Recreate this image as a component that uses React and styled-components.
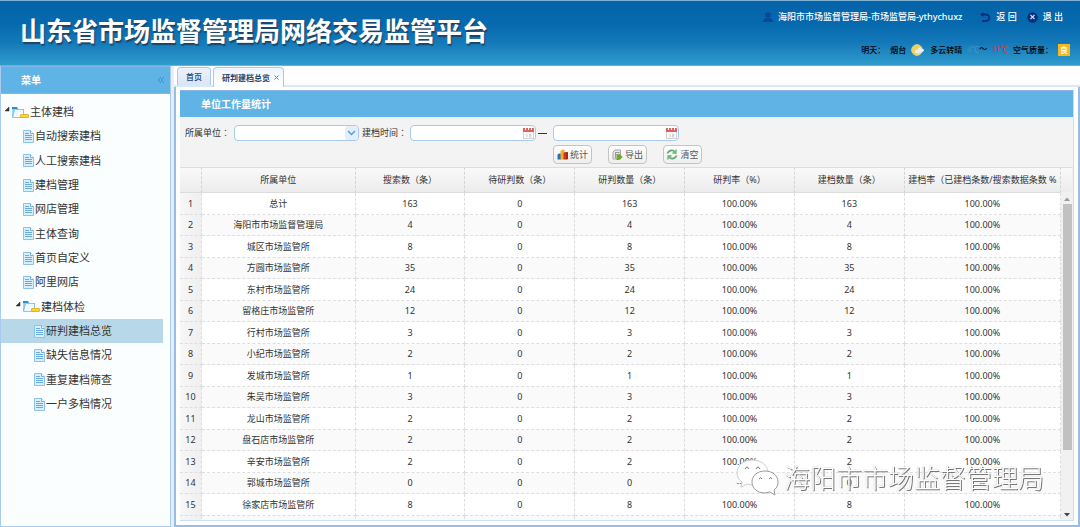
import React from "react";
import styled, { createGlobalStyle } from "styled-components";

const Global = createGlobalStyle`
  *, *::before, *::after { box-sizing: border-box; }
  body {
    margin: 0;
    font: 9px/12px "Noto Sans", "Noto Sans CJK SC", sans-serif;
    color: #333;
    background: #fff;
  }
  button, input, select { font: inherit; color: inherit; }
`;

const Page = styled.div`
  height: 100vh;
  display: flex;
  flex-direction: column;
  overflow: hidden;
`;

const Header = styled.header`
  flex: none;
  height: 66px;
  display: flex;
  justify-content: space-between;
  border-top: 1px solid #7fb4d8;
  border-bottom: 1px solid #66b0dc;
  background: linear-gradient(#0563a9 0%, #0669ae 35%, #1479b9 65%, #2f9ccd 100%);
`;

const Title = styled.h1`
  margin: 0;
  padding: 9px 0 0 20px;
  font: 700 26px/40px "Noto Sans CJK SC", sans-serif;
  color: #fff;
  text-shadow: 1px 2px 1px #1d4467;
  white-space: nowrap;
`;

const HeaderSide = styled.div`
  display: flex;
  flex-direction: column;
  align-items: flex-end;
  gap: 20px;
  padding: 10px 10px 0 0;
  white-space: nowrap;
`;

const UserBar = styled.div`
  display: flex;
  align-items: center;
  padding-right: 7px;
  color: #fff;
  font-weight: 500;
`;

const UserName = styled.span`
  margin: 0 18px 0 5px;
`;

const HeaderLink = styled.a`
  display: flex;
  align-items: center;
  gap: 5px;
  margin-left: ${(p) => (p.$spaced ? 10 : 0)}px;
  color: #fff;
  text-decoration: none;
`;

const Weather = styled.div`
  display: flex;
  align-items: center;
  gap: 5px;
  color: #000;
  font-family: "Noto Sans CJK SC", sans-serif;
  font-size: 8px;
  font-weight: 500;
`;

const Degree = styled.span`
  font-family: "Liberation Serif", "Noto Sans CJK SC", serif;
  color: ${(p) => p.$color};
`;

const AirBadge = styled.span`
  width: 12px;
  height: 12px;
  line-height: 12px;
  text-align: center;
  background: #f9b721;
  color: #fff;
`;

const Body = styled.div`
  flex: 1;
  min-height: 0;
  display: flex;
  gap: 3px;
  background: #e6effb;
`;

const Sidebar = styled.nav`
  flex: none;
  width: 171px;
  border: solid #a9cbf0;
  border-width: 0 1px 1px 1px;
  background: #fafeff;
`;

const MenuHead = styled.div`
  display: flex;
  align-items: center;
  justify-content: space-between;
  height: 28px;
  padding: 0 5px 0 20px;
  border: solid #86b4e6;
  border-width: 1px 0;
  background: #60b4e5;
  color: #fff;
  font-size: 10px;
  font-weight: 700;
`;

const CollapseButton = styled.button`
  display: flex;
  padding: 0;
  border: 0;
  background: none;
`;

const Tree = styled.ul`
  margin: 6px 7px 0 0;
  padding: 0;
  list-style: none;
`;

const TreeItem = styled.li`
  height: 24px;
  &:nth-child(3n) { height: 25px; }
`;

const TreeLink = styled.a`
  display: flex;
  align-items: center;
  height: 100%;
  padding-left: ${(p) => p.$indent}px;
  gap: 1px;
  background: ${(p) => (p.$active ? "#b7d8e8" : "transparent")};
  color: #333;
  font-size: 11px;
  line-height: 16px;
  text-decoration: none;
  white-space: nowrap;
`;

const Main = styled.main`
  flex: 1;
  min-width: 0;
  display: flex;
  flex-direction: column;
  background: #fff;
`;

const Tabs = styled.div`
  flex: none;
  display: flex;
  align-items: flex-end;
  gap: 2px;
  height: 21px;
  padding: 0 3px;
  border-bottom: 2px solid #dbe8f8;
`;

const Tab = styled.button`
  display: flex;
  align-items: center;
  gap: 4px;
  height: ${(p) => (p.$active ? 20 : 18)}px;
  margin-bottom: ${(p) => (p.$active ? -2 : 0)}px;
  padding: 0 ${(p) => (p.$active ? 4 : 8)}px 0 8px;
  border: 1px solid #a9c8ee;
  border-bottom: 0;
  border-radius: 4px 4px 0 0;
  background: ${(p) => (p.$active ? "linear-gradient(#eef5fd, #fff)" : "linear-gradient(#edf3fc, #d9e6f7)")};
  color: #24466f;
  font-size: 8px;
  font-weight: ${(p) => (p.$active ? 700 : 500)};
  white-space: nowrap;
`;

const Frame = styled.div`
  flex: 1;
  min-height: 0;
  display: flex;
  padding: 3px 4px 4px 4px;
  border: solid #96bce8;
  border-width: 0 2px 2px 2px;
`;

const Panel = styled.section`
  position: relative;
  flex: 1;
  min-width: 0;
  display: flex;
  flex-direction: column;
  border: solid #c9dff5;
  border-width: 0 1px 1px 0;
  overflow: hidden;
`;

const PanelTitle = styled.h2`
  flex: none;
  margin: 0;
  height: 27px;
  padding-left: 21px;
  border-top: 1px solid #86b4e6;
  background: #60b4e5;
  color: #fff;
  font-size: 10px;
  line-height: 26px;
`;

const Filters = styled.form`
  flex: none;
  height: 50px;
  padding: 8px 0 0 5px;
  background: #f3f3f3;
`;

const FilterRow = styled.div`
  display: flex;
  align-items: center;
  height: 16px;
  white-space: nowrap;
`;

const FieldLabel = styled.label`
  width: ${(p) => p.$width}px;
  font-family: "Noto Sans", "Noto Sans CJK TC", sans-serif;
`;

const Field = styled.div`
  position: relative;
  width: ${(p) => p.$width || 126}px;
  height: 16px;
  margin-right: ${(p) => p.$after || 0}px;
  svg { position: absolute; right: 1px; top: 1px; pointer-events: none; }
`;

const Dash = styled.span`
  width: 9px;
  height: 1px;
  margin: 0 6px 0 2px;
  background: #333;
`;

const controlBox = `
  display: block;
  width: 100%;
  height: 16px;
  margin: 0;
  padding: 0 16px 0 4px;
  border: 1px solid #a9c9ee;
  border-radius: 4px;
  background: #fff;
  appearance: none;
  outline: 0;
`;
const Select = styled.select`${controlBox}`;
const Input = styled.input`${controlBox}`;

const Actions = styled.div`
  display: flex;
  gap: 16px;
  margin: 4px 0 0 368px;
`;

const ActionButton = styled.button`
  display: flex;
  align-items: center;
  justify-content: center;
  gap: 2px;
  width: 39px;
  height: 19px;
  padding: 0;
  border: 1px solid #c4c4c4;
  border-radius: 4px;
  background: linear-gradient(#fff, #eee);
  color: #555;
  white-space: nowrap;
`;

const GridArea = styled.div`
  flex: 1;
  min-height: 0;
  overflow: hidden;
  background: #fff;
`;

const Table = styled.table`
  width: 100%;
  border-collapse: separate;
  border-spacing: 0;
  table-layout: fixed;
`;

const Th = styled.th`
  height: 26px;
  padding: 0;
  border: 1px solid #ddd;
  border-width: 1px 0;
  border-right: 1px ${(p) => (p.$last ? "solid #eee" : "dashed #d4d4d4")};
  background: linear-gradient(#f9f9f9, #ececec);
  font-family: "Noto Sans", "Noto Sans CJK TC", sans-serif;
  font-weight: 400;
  overflow: hidden;
  white-space: nowrap;
`;

const Row = styled.tr`
  height: 22px;
  background: #fff;
  &:nth-child(even) { height: 21px; background: #fafafa; }
`;

const Td = styled.td`
  padding: 0;
  border: 0 dashed #dedede;
  border-width: 0 1px 1px 0;
  text-align: center;
  line-height: 12px;
  color: ${(p) => (p.$alert ? "#e33" : "#333")};
  background: ${(p) => (p.$index ? "linear-gradient(90deg, #f7f7f7, #efefef)" : "none")};
`;

const ScrollTrack = styled.div`
  position: absolute;
  top: 102px;
  right: 0;
  bottom: 0;
  width: 12px;
  display: flex;
  flex-direction: column;
  align-items: center;
  padding: 5px 0 3px;
  gap: 3px;
  background: #f1f1f1;
`;

const ScrollThumb = styled.div`
  width: 9px;
  height: 77%;
  margin-bottom: auto;
  background: #c1c1c1;
`;

const Watermark = styled.div`
  position: fixed;
  right: 36px;
  bottom: 31px;
  display: flex;
  align-items: center;
  gap: 4px;
  font: 300 26px/38px "Noto Sans CJK SC", sans-serif;
  color: #fff;
  text-shadow: 1px 1px 0 #777, 0 0 1px #aaa;
  white-space: nowrap;
  pointer-events: none;
`;

const FolderIcon = () => (
  <svg width="18" height="13" viewBox="0 0 18 13">
    <path d="M1 1h5l1 2h6v8H1z" fill="#2b8fc9" />
    <path d="M3.500 3.500h9v8H1.500z" fill="#eefaff" stroke="#86c8ec" />
    <path d="M1 3v8l2-7h3" fill="#a9daf5" />
    <rect x="9.500" y="8.500" width="8" height="3" rx="0.500" fill="#fbd42c" stroke="#e2aa10" strokeWidth="0.800" />
  </svg>
);

const FileIcon = () => (
  <svg width="11" height="13" viewBox="0 0 11 13">
    <path d="M.5.500h7l3 3v9H.5z" fill="#d8effb" stroke="#8cc3e6" />
    <path d="M7.500.500v3h3" fill="#fff" stroke="#74b4dc" />
    <path d="M2 3.500h4M2 5.500h7M2 7.500h7M2 9.500h7" stroke="#6aaad6" />
  </svg>
);

const Expander = () => (
  <svg width="6" height="6" viewBox="0 0 6 6" style={{ marginBottom: "6px" }}>
    <path d="M5 1v4H1z" fill="#333" stroke="#333" strokeWidth=".5" />
  </svg>
);

const CalendarIcon = () => (
  <svg width="13" height="13" viewBox="0 0 13 13">
    <rect x="1.500" y="2.500" width="10" height="10" fill="#fafafa" stroke="#d5d0d0" />
    <path d="M1 2h11v4H1z" fill="#e0625e" />
    <path d="M3.500 1v3M6.500 1v3M9.500 1v3" stroke="#fff" />
    <path d="M5 8v3M7 8.500h2v1H7.500v1.500h2" fill="none" stroke="#c4c4c4" strokeWidth=".8" />
  </svg>
);

const StatIcon = () => (
  <svg width="11" height="11" viewBox="0 0 11 11">
    <path d="M.5 5.500L2 4.500h2.500V10l-1 .5h-3z" fill="#2c6fb8" />
    <path d="M3.500 2L5 .8h2.500V10l-1 .5h-3z" fill="#f0ae24" />
    <path d="M6.500 4L8 3h2.800v7l-1 .5H6.500z" fill="#cc3524" />
    <path d="M9.500 4.300v6.200l1.300-.5V3z" fill="#97180f" />
  </svg>
);

const ExportIcon = () => (
  <svg width="11" height="11" viewBox="0 0 11 11">
    <path d="M1 10V3l2-2h5.500v9z" fill="#e9e9e9" stroke="#a5a5a5" />
    <path d="M3.500 3.500h4M3.500 5.500h3M3.500 3v6" stroke="#999" />
    <path d="M4.500 6h2V4.300L10.800 8 7 11H4.500z" fill="#6cab24" />
  </svg>
);

const ClearIcon = () => (
  <svg width="12" height="11" viewBox="0 0 12 11">
    <g fill="none" stroke="#62b06b" strokeWidth="1.800">
      <path d="M1.500 4.500C2.500 1 7 .5 9 3" />
      <path d="M10.500 6.500C9.500 10 5 10.500 3 8" />
      <path d="M10 .5v3.500H6.500M2 10.500V7h3.500" strokeWidth="1.300" />
    </g>
  </svg>
);

const UserIcon = () => (
  <svg width="10" height="10" viewBox="0 0 10 10">
    <circle cx="5" cy="3" r="2.800" fill="#0a4796" />
    <path d="M0 10c0-3 2-4 5-4s5 1 5 4z" fill="#0a4796" />
  </svg>
);

const BackIcon = () => (
  <svg width="11" height="11" viewBox="0 0 11 11">
    <path d="M2 2.500h4a3.200 3.200 0 0 1 0 6.500H2" fill="none" stroke="#06307d" strokeWidth="2" />
    <path d="M0 2.500L3.500 0v5z" fill="#06307d" />
  </svg>
);

const ExitIcon = () => (
  <svg width="11" height="11" viewBox="0 0 11 11">
    <circle cx="5.500" cy="5.500" r="5.200" fill="#06307d" />
    <path d="M3.500 3l4 4M7.500 3l-4 4" stroke="#cfe0f5" strokeWidth="1.100" />
  </svg>
);

const SunIcon = () => (
  <svg width="14" height="12" viewBox="0 0 14 12">
    <circle cx="6" cy="6" r="5.300" fill="#f8cf45" stroke="#d9dca0" />
    <path d="M4 8.500c-1-2 1-3.500 2.500-2.500C7 3 10 3 10.500 5c2.500-.5 3 1 2.500 1.500-1 2-3 1.500-4 2.500s-4 1-5-.5z" fill="#e9edf0" />
  </svg>
);

const WechatIcon = () => (
  <svg width="44" height="38" viewBox="0 0 44 38">
    <g fill="#fff" stroke="#ccc" strokeWidth="1">
      <path d="M16 2C7 2 1 8 1 15c0 4 2 7 5 9l-1 5 6-3c14 4 21-4 21-11C32 7 25 2 16 2z" />
      <path d="M29 13c-8 0-13 5-13 11s5 11 13 11l5-1 5 3-1-5c3-2 4-5 4-8 0-6-5-11-13-11z" stroke="#999" />
      <path d="M9 11q2-4 4 0M20 11q2-4 4 0M23 21q2-3 3 0M33 21q2-3 3 0" stroke="#777" />
    </g>
  </svg>
);

const Chevron = () => (
  <svg width="13" height="14" viewBox="0 0 13 14">
    <rect width="13" height="14" rx="3" fill="#e5effb" />
    <path d="M3 5l3.500 3.500L10 5" fill="none" stroke="#4ea3d9" strokeWidth="1.500" />
  </svg>
);

const ScrollArrow = ({ down }) => (
  <svg width="6" height="4" viewBox="0 0 6 4">
    <path d={down ? "M0 0h6L3 3.500z" : "M0 4h6L3 .5z"} fill={down ? "#444" : "#999"} />
  </svg>
);

const menu = [
  { label: "主体建档", kind: "folder", indent: 3 },
  { label: "自动搜索建档", indent: 22 },
  { label: "人工搜索建档", indent: 22 },
  { label: "建档管理", indent: 22 },
  { label: "网店管理", indent: 22 },
  { label: "主体查询", indent: 22 },
  { label: "首页自定义", indent: 22 },
  { label: "阿里网店", indent: 22 },
  { label: "建档体检", kind: "folder", indent: 14 },
  { label: "研判建档总览", indent: 33, active: true },
  { label: "缺失信息情况", indent: 33 },
  { label: "重复建档筛查", indent: 33 },
  { label: "一户多档情况", indent: 33 },
];

const columns = ["所属单位", "搜索数（条）", "待研判数（条）", "研判数量（条）", "研判率（%）", "建档数量（条）", "建档率（已建档条数/搜索数据条数 %"];
const columnShares = ["17.200%", "12.300%", "12.300%", "12.300%", "12.300%", "12.300%"];

const units = [
  ["总计", 163], ["海阳市市场监督管理局", 4], ["城区市场监管所", 8], ["方圆市场监管所", 35],
  ["东村市场监管所", 24], ["留格庄市场监管所", 12], ["行村市场监管所", 3], ["小纪市场监管所", 2],
  ["发城市场监管所", 1], ["朱吴市场监管所", 3], ["龙山市场监管所", 2], ["盘石店市场监管所", 2],
  ["辛安市场监管所", 2], ["郭城市场监管所", 0], ["徐家店市场监管所", 8],
];

export default function App() {
  return (
    <Page>
      <Global />
      <Header>
        <Title>山东省市场监督管理局网络交易监管平台</Title>
        <HeaderSide>
          <UserBar>
            <UserIcon />
            <UserName>海阳市市场监督管理局-市场监管局-ythychuxz</UserName>
            <HeaderLink href="#back"><BackIcon />返 回</HeaderLink>
            <HeaderLink href="#exit" $spaced><ExitIcon />退 出</HeaderLink>
          </UserBar>
          <Weather>
            <span>明天：</span>
            <span>烟台</span>
            <SunIcon />
            <span>多云转晴</span>
            <span><Degree $color="#3f97c9">4℃</Degree>～</span>
            <Degree $color="#d8352c">11℃</Degree>
            <span>空气质量：</span>
            <AirBadge>良</AirBadge>
          </Weather>
        </HeaderSide>
      </Header>
      <Body>
        <Sidebar>
          <MenuHead>
            菜单
            <CollapseButton type="button" aria-label="收起菜单">
              <svg width="8" height="8" viewBox="0 0 8 8">
                <path d="M4 1L1 4l3 3M7 1L4 4l3 3" fill="none" stroke="#2f8fd0" />
              </svg>
            </CollapseButton>
          </MenuHead>
          <Tree>
            {menu.map((m) => (
              <TreeItem key={m.label}>
                <TreeLink href="#menu" $indent={m.indent} $active={m.active}>
                  {m.kind ? <><Expander /><FolderIcon /></> : <FileIcon />}
                  {m.label}
                </TreeLink>
              </TreeItem>
            ))}
          </Tree>
        </Sidebar>
        <Main>
          <Tabs>
            <Tab type="button">首页</Tab>
            <Tab type="button" $active>
              研判建档总览
              <svg width="5" height="5" viewBox="0 0 5 5"><path d="M.5.500l4 4M4.500.500l-4 4" stroke="#5b83b3" /></svg>
            </Tab>
          </Tabs>
          <Frame>
            <Panel>
              <PanelTitle>单位工作量统计</PanelTitle>
              <Filters>
                <FilterRow>
                  <FieldLabel htmlFor="unit" $width={49}>所属单位：</FieldLabel>
                  <Field $width={125} $after={3}><Select id="unit" /><Chevron /></Field>
                  <FieldLabel htmlFor="from" $width={48}>建档时间：</FieldLabel>
                  <Field><Input id="from" type="text" /><CalendarIcon /></Field>
                  <Dash />
                  <Field><Input type="text" aria-label="结束时间" /><CalendarIcon /></Field>
                </FilterRow>
                <Actions>
                  <ActionButton type="button"><StatIcon />统计</ActionButton>
                  <ActionButton type="button"><ExportIcon />导出</ActionButton>
                  <ActionButton type="button"><ClearIcon />清空</ActionButton>
                </Actions>
              </Filters>
              <GridArea>
                <Table>
                  <colgroup>
                    <col width="22" />
                    {columnShares.map((w, i) => <col key={i} width={w} />)}
                    <col />
                    <col width="12" />
                  </colgroup>
                  <thead>
                    <tr>
                      <Th />
                      {columns.map((c) => <Th key={c}>{c}</Th>)}
                      <Th $last />
                    </tr>
                  </thead>
                  <tbody>
                    {units.map(([name, n], i) => (
                      <Row key={name}>
                        <Td $index>{i + 1}</Td>
                        <Td>{name}</Td>
                        <Td>{n}</Td>
                        <Td>0</Td>
                        <Td>{n}</Td>
                        <Td $alert={!n}>{n ? "100.00%" : "--"}</Td>
                        <Td>{n}</Td>
                        <Td $alert={!n}>{n ? "100.00%" : "--"}</Td>
                      </Row>
                    ))}
                    <Row>
                      <Td $index />
                      {columns.map((c) => <Td key={c} />)}
                    </Row>
                  </tbody>
                </Table>
              </GridArea>
              <ScrollTrack>
                <ScrollArrow />
                <ScrollThumb />
                <ScrollArrow down />
              </ScrollTrack>
            </Panel>
          </Frame>
        </Main>
      </Body>
      <Watermark><WechatIcon />海阳市市场监督管理局</Watermark>
    </Page>
  );
}
